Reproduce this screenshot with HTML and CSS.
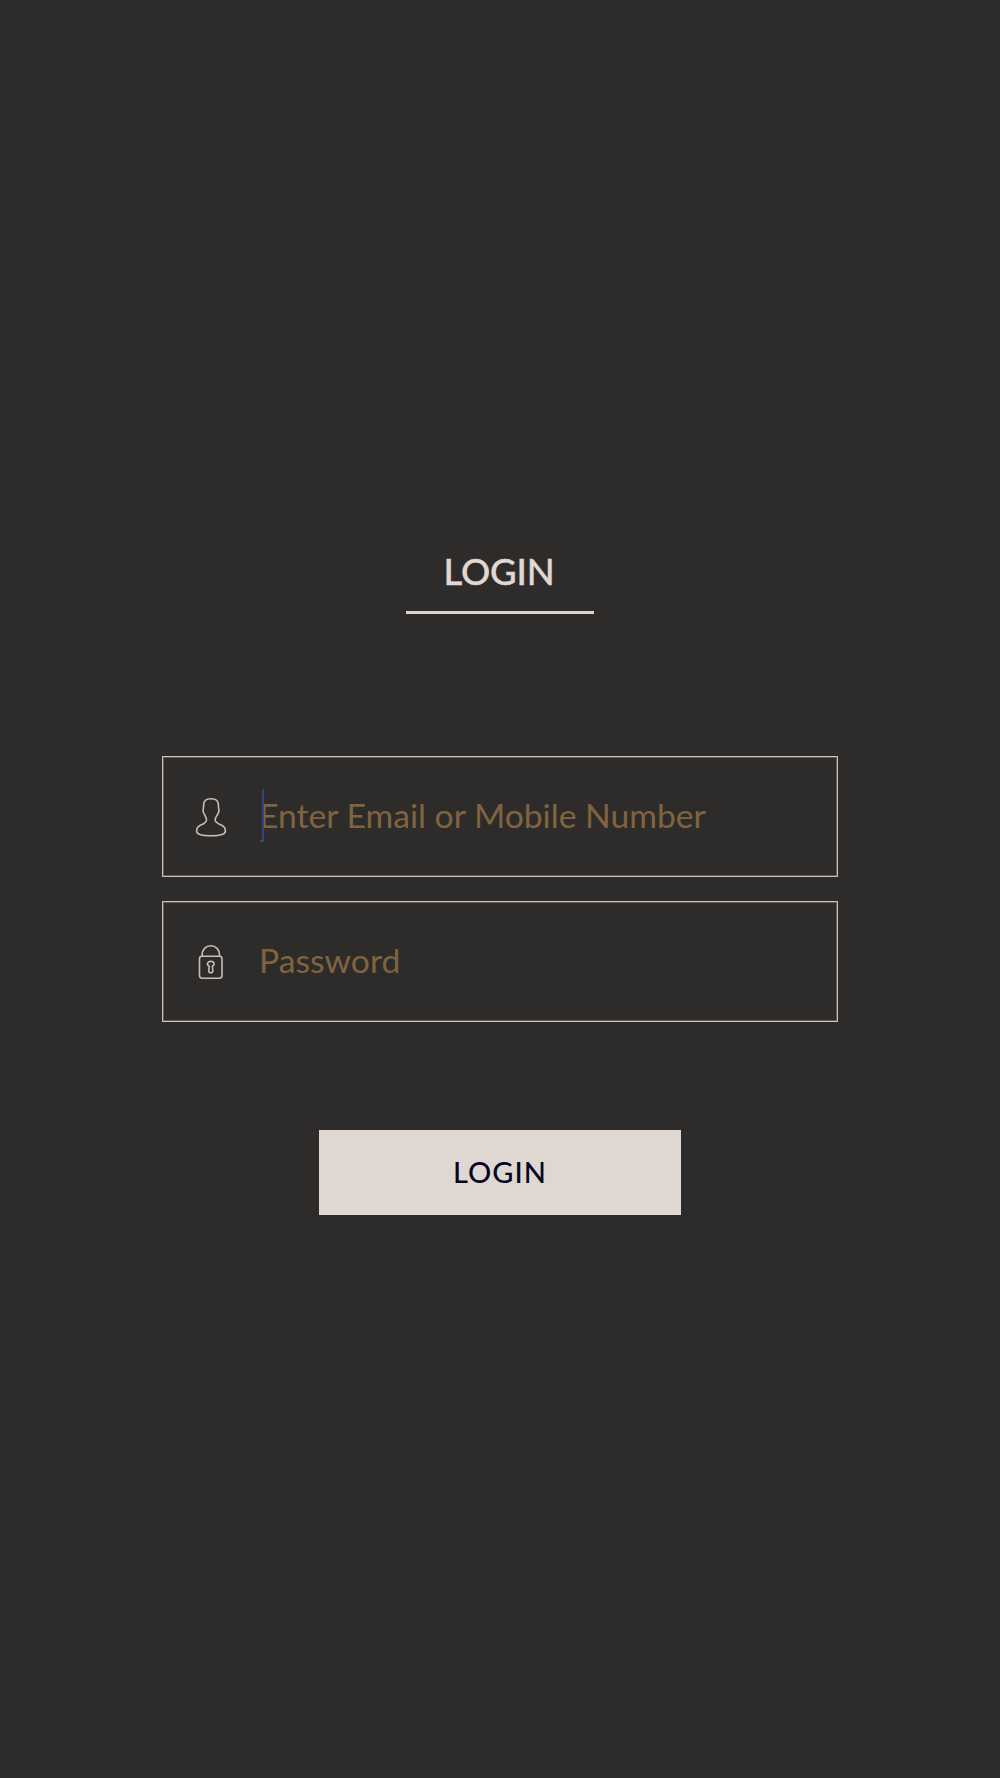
FILE: index.html
```
<!DOCTYPE html>
<html lang="en">
<head>
  <meta charset="UTF-8" />
  <meta name="viewport" content="width=device-width, initial-scale=1.0"/>
  <title>Login</title>
  <link rel="stylesheet" href="styles.css">
</head>
<body>

  <h1 class="title">LOGIN</h1>

  <form class="login-form">
    <div class="field">
      <svg class="icon" viewBox="0 0 34 42">
        <path d="M17 2.7c-5 0-7.4 2-7.4 6.2 0 1.7.1 3.2-.5 4.7-.4 2 .4 3.4 1.3 4.8.7 1.5 2.1 3.3 2.1 5.4 0 3.4-3.5 4.2-6.3 5.5-2.7 1.3-3.6 3.3-3.6 6 0 3.2 5 4.5 14.4 4.5s14.4-1.3 14.4-4.5c0-2.7-.9-4.7-3.6-6-2.8-1.3-6.7-2.4-6.7-5.5 0-2.1 1.8-3.9 2.5-5.4.8-1.4 1.7-2.8 1.3-4.8-.6-1.5-.5-3-.5-4.7 0-4.2-2.4-6.2-7.4-6.2z"/>
      </svg>
      <input type="text" placeholder="Enter Email or Mobile Number"/>
      <span class="caret"></span>
    </div>
    <div class="field">
      <svg class="icon" viewBox="0 0 34 42">
        <path d="M8.1 15v-1.3c0-4.9 3.7-9 8.7-9s8.7 4.1 8.7 9v1.3"/>
        <rect x="5.5" y="15.2" width="22.5" height="22" rx="2.6"/>
        <path d="M15.2 25.3c-3.2-2-1.6-4.9 1.6-4.9s4.8 2.9 1.6 4.9l.5 4.8c.1 2.1-4.3 2.1-4.2 0z"/>
      </svg>
      <input type="password" placeholder="Password"/>
    </div>
    <button type="button">LOGIN</button>
  </form>

</body>
</html>
```

FILE: styles.css
```
* {
  box-sizing: border-box;
}
body {
  margin: 0;
  padding-top: 543px;
  min-height: 1778px;
  font-family: Lato, "Open Sans", sans-serif;
  background: #2e2c2a;
  display: flex;
  flex-direction: column;
  align-items: center;
}
.title {
  width: 188px;
  height: 71px;
  margin: 0;
  padding-top: 6px;
  padding-right: 2px;
  border-bottom: 3px solid #ddd3cb;
  color: #e0d8d2;
  font-size: 36.5px;
  line-height: 44px;
  font-weight: 500;
  letter-spacing: -0.2px;
  text-align: center;
  -webkit-text-stroke: 0.4px #e0d8d2;
}
.login-form {
  display: flex;
  flex-direction: column;
  align-items: center;
  gap: 24px;
  width: 676px;
  margin-top: 142px;
}
.field {
  position: relative;
  display: flex;
  align-items: center;
  width: 100%;
  height: 121px;
  padding-left: 31px;
  border: 1px solid #c9c5ba;
  box-shadow: inset 0 0 0 1px #625f5a;
}
.icon {
  width: 34px;
  height: 42px;
  fill: none;
  stroke: #c4beb7;
  stroke-width: 1.6;
}
input {
  flex: 1;
  height: 60px;
  margin-left: 31px;
  padding: 0 0 3px;
  border: none;
  outline: none;
  background: transparent;
  color: #e0d8d2;
  font-family: inherit;
  font-size: 33.7px;
}
input::placeholder {
  color: #80633f;
}
.caret {
  position: absolute;
  left: 99px;
  top: 32px;
  width: 2px;
  height: 53px;
  background: #31457f;
}
.caret::after {
  content: "";
  position: absolute;
  right: 0;
  bottom: 0;
  width: 4px;
  height: 2px;
  background: #31457f;
}
button {
  width: 362px;
  height: 85px;
  margin-top: 84px;
  padding: 0 0 2px;
  border: none;
  background: #dfd7d1;
  color: #060720;
  font-family: inherit;
  font-size: 29px;
  font-weight: 500;
  letter-spacing: 1px;
  cursor: pointer;
}
```
